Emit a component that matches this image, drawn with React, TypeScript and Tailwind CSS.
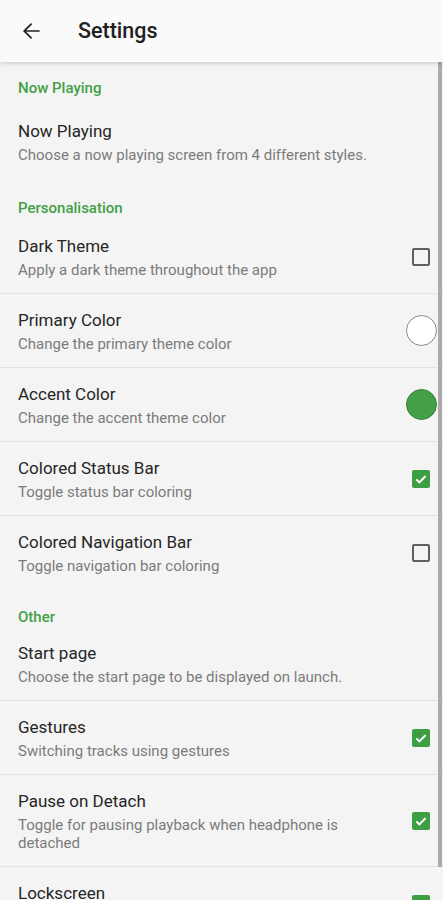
type Widget = 'none' | 'checkbox' | 'checked' | 'circle-white' | 'circle-green';

interface Pref {
  title: string;
  summary: string;
  widget: Widget;
}

interface Section {
  name: string;
  className: string;
  items: Pref[];
}

const sections: Section[] = [
  {
    name: 'Now Playing',
    className: 'h-[43px] pt-4',
    items: [
      {
        title: 'Now Playing',
        summary: 'Choose a now playing screen from 4 different styles.',
        widget: 'none',
      },
    ],
  },
  {
    name: 'Personalisation',
    className: 'h-[42px] pt-5',
    items: [
      { title: 'Dark Theme', summary: 'Apply a dark theme throughout the app', widget: 'checkbox' },
      { title: 'Primary Color', summary: 'Change the primary theme color', widget: 'circle-white' },
      { title: 'Accent Color', summary: 'Change the accent theme color', widget: 'circle-green' },
      { title: 'Colored Status Bar', summary: 'Toggle status bar coloring', widget: 'checked' },
      { title: 'Colored Navigation Bar', summary: 'Toggle navigation bar coloring', widget: 'checkbox' },
    ],
  },
  {
    name: 'Other',
    className: 'h-[38px] pt-[18px]',
    items: [
      { title: 'Start page', summary: 'Choose the start page to be displayed on launch.', widget: 'none' },
      { title: 'Gestures', summary: 'Switching tracks using gestures', widget: 'checked' },
      {
        title: 'Pause on Detach',
        summary: 'Toggle for pausing playback when headphone is detached',
        widget: 'checked',
      },
      { title: 'Lockscreen', summary: 'Show album cover art on the lockscreen', widget: 'checked' },
    ],
  },
];

function WidgetView({ widget }: { widget: Widget }) {
  if (widget === 'checkbox') {
    return <div className="mr-[7px] h-[18px] w-[18px] rounded-[2px] border-2 border-[#5f5f5f]" />;
  }
  if (widget === 'checked') {
    return (
      <div className="mr-[7px] flex h-[18px] w-[18px] items-center justify-center rounded-[2px] bg-[#3e9e42]">
        <svg viewBox="0 0 24 24" className="h-[16px] w-[16px]" fill="none" stroke="white" strokeWidth={3}>
          <path d="M5 12.5l4.5 4.5L19 7.5" />
        </svg>
      </div>
    );
  }
  if (widget === 'circle-white') {
    return <div className="h-[31px] w-[31px] rounded-full border border-[#8a8a8a] bg-white" />;
  }
  if (widget === 'circle-green') {
    return <div className="h-[31px] w-[31px] rounded-full border border-[#3a7d3c] bg-[#43a047]" />;
  }
  return null;
}

function PrefRow({ pref, first }: { pref: Pref; first: boolean }) {
  return (
    <div className={`flex items-center pl-[18px] pr-[6px] ${first ? '' : 'border-t border-[#e2e2e2]'}`}>
      <div className="flex-1 pt-4 pb-[14px]">
        <div className="text-[17px] leading-5 text-[#262626]">{pref.title}</div>
        <div className="mt-[5px] text-[15px] leading-[18px] text-[#7b7b7b]">{pref.summary}</div>
      </div>
      <div className="flex w-[46px] justify-end">
        <WidgetView widget={pref.widget} />
      </div>
    </div>
  );
}

export default function App() {
  return (
    <div
      className="relative flex h-[900px] w-full flex-col overflow-hidden bg-[#f4f4f4]"
      style={{ fontFamily: 'Roboto, "Noto Sans", sans-serif' }}
    >
      <div className="relative z-10 flex h-[62px] shrink-0 items-center bg-[#fafafa] shadow-[0_2px_4px_rgba(0,0,0,0.14)]">
        <svg viewBox="0 0 24 24" className="ml-[18px] h-[26px] w-[26px]" fill="#222">
          <path d="M20 11.2H7.6l5.5-5.5L12 4.6 4.6 12l7.4 7.4 1.1-1.1-5.5-5.5H20z" />
        </svg>
        <h1 className="ml-[34px] text-[21.5px] font-medium text-[#212121]">Settings</h1>
      </div>

      <div className="flex-1">
        {sections.map((section) => (
          <div key={section.name}>
            <div className={`px-[18px] text-[15px] font-medium leading-5 text-[#43a047] ${section.className}`}>
              {section.name}
            </div>
            {section.items.map((pref, i) => (
              <PrefRow key={pref.title} pref={pref} first={i === 0} />
            ))}
          </div>
        ))}
      </div>

      <div className="absolute right-[1px] top-[62px] h-[805px] w-[4px] bg-[#ababab]" />
    </div>
  );
}
